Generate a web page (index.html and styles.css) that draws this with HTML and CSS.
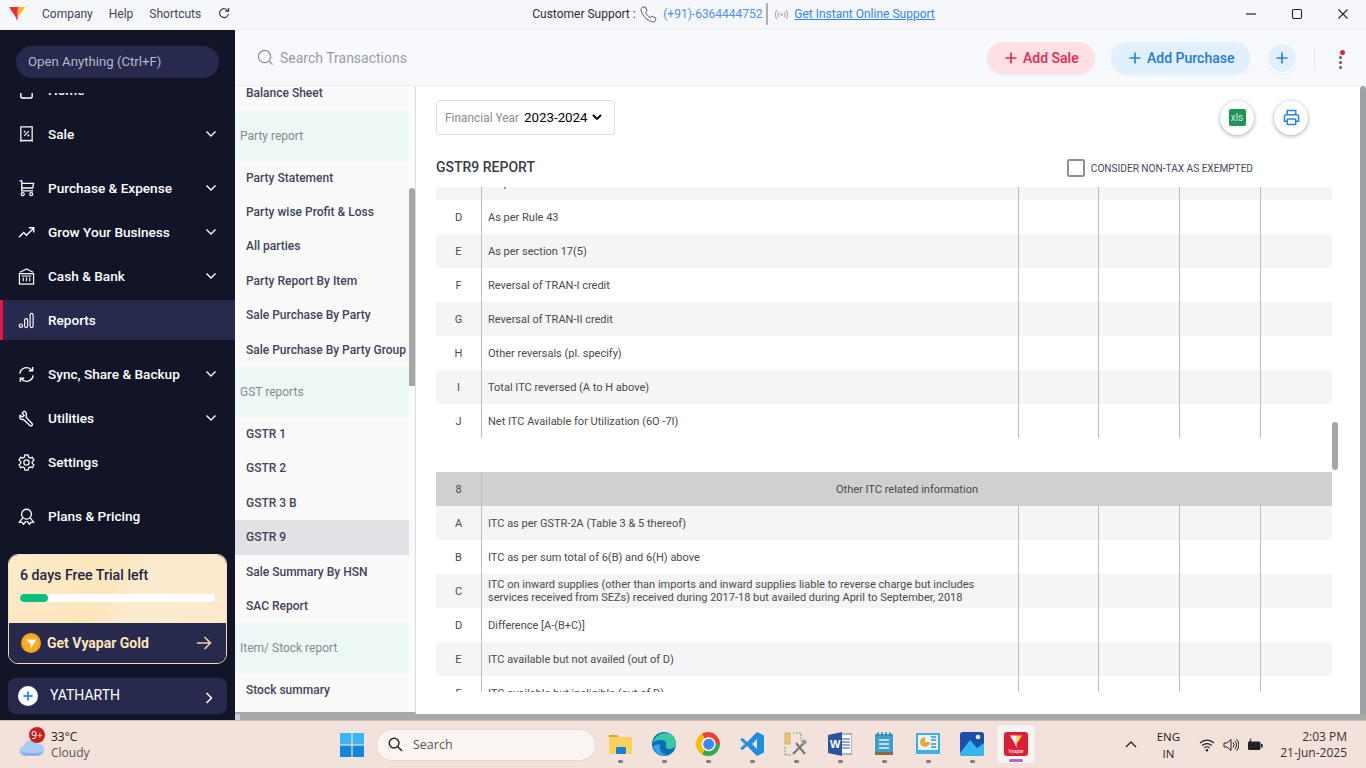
FILE: index.html
```html
<!DOCTYPE html>
<html lang="en">
<head>
<meta charset="utf-8">
<title>GSTR9 Report</title>
<link rel="stylesheet" href="styles.css">
</head>
<body>
<div class="app">
  <header class="titlebar">
    <svg class="logo" viewBox="0 0 16 14"><polygon points="0,0 9,0 8.5,14 6,9" fill="#ee2a3c"/><polygon points="9,0 16,0 8.5,11" fill="#fbb81f"/></svg>
    <nav class="menu"><span>Company</span><span>Help</span><span>Shortcuts</span></nav>
    <svg class="reload" viewBox="0 0 14 14"><path d="M11.6 3.4A5.2 5.2 0 1 0 12.2 7" fill="none" stroke="#333" stroke-width="1.3"/><path d="M8.4 3.6h4V0" fill="none" stroke="#333" stroke-width="1.3"/></svg>
    <div class="support">
      <span class="support-label">Customer Support :</span>
      <svg class="phone" viewBox="0 0 18 18"><path d="M3 1.2 5.6 1l2 4-1.700 1.500c.8 2.400 2.900 4.700 5.400 5.800l1.500-1.700 4 2.200-.4 2.700c-.3 1.100-1.500 1.600-2.800 1.300C7.500 15.500 2.500 10.500 1.200 4.500.9 3 1.700 1.600 3 1.200Z" fill="none" stroke="#555" stroke-width="1"/></svg>
      <span class="support-phone">(+91)-6364444752</span>
      <span class="support-rule"></span>
      <svg class="signal" viewBox="0 0 12 10"><circle cx="6" cy="5" r="1.200" fill="#aaa"/><path d="M3.800 2.500a3.500 3.500 0 0 0 0 5M8.200 2.500a3.500 3.500 0 0 1 0 5M1.800 1a6 6 0 0 0 0 8M10.200 1a6 6 0 0 1 0 8" fill="none" stroke="#aaa" stroke-width="1"/></svg>
      <a class="support-link">Get Instant Online Support</a>
    </div>
    <div class="winctl">
      <svg viewBox="0 0 12 12"><path d="M1 6h10" stroke="#222" stroke-width="1.200"/></svg>
      <svg viewBox="0 0 12 12"><rect x="1.500" y="1.500" width="9" height="9" rx="1.200" fill="none" stroke="#222" stroke-width="1.100"/></svg>
      <svg viewBox="0 0 12 12"><path d="M1.500 1.500l9 9M10.500 1.500l-9 9" stroke="#222" stroke-width="1.100"/></svg>
    </div>
  </header>

  <div class="shell">
    <aside class="sidebar">
      <div class="open-wrap"><div class="open-pill">Open Anything (Ctrl+F)</div></div>
      <nav class="nav">
        <div class="nav-item nav-first">
          <svg class="nav-icon" viewBox="0 0 18 18"><path d="M3 7v8a2 2 0 0 0 2 2h8a2 2 0 0 0 2-2V7" fill="none" stroke="#fff" stroke-width="1.500"/></svg>
          <span class="nav-text">Home</span>
          <svg class="chev" viewBox="0 0 12 8"><path d="M1.500 1.500 6 6l4.500-4.500" fill="none" stroke="#fff" stroke-width="1.400"/></svg>
        </div>
        <div class="nav-item">
          <svg class="nav-icon" viewBox="0 0 18 18"><path d="M3 1h12v15l-1.500-1-1.500 1-1.500-1-1.500 1-1.500-1-1.500 1-1.500-1L3 16Z" fill="none" stroke="#fff" stroke-width="1.300"/><path d="M6.500 10.500l5-5" stroke="#fff" stroke-width="1.200"/><circle cx="7" cy="6" r="1" fill="#fff"/><circle cx="11" cy="10" r="1" fill="#fff"/></svg>
          <span class="nav-text">Sale</span>
          <svg class="chev" viewBox="0 0 12 8"><path d="M1.500 1.500 6 6l4.500-4.500" fill="none" stroke="#fff" stroke-width="1.400"/></svg>
        </div>
        <div class="nav-item nav-gap">
          <svg class="nav-icon" viewBox="0 0 18 18"><path d="M1.500 1h2.500v10.500h12M4 3.500h12.500l-1 5H4" fill="none" stroke="#fff" stroke-width="1.400"/><circle cx="5" cy="15" r="1.600" fill="none" stroke="#fff" stroke-width="1.300"/><circle cx="14" cy="15" r="1.600" fill="none" stroke="#fff" stroke-width="1.300"/></svg>
          <span class="nav-text">Purchase &amp; Expense</span>
          <svg class="chev" viewBox="0 0 12 8"><path d="M1.500 1.500 6 6l4.500-4.500" fill="none" stroke="#fff" stroke-width="1.400"/></svg>
        </div>
        <div class="nav-item">
          <svg class="nav-icon" viewBox="0 0 18 18"><path d="M1 14l5-5 3 3 7.500-7.500M11.500 4h5.200v5" fill="none" stroke="#fff" stroke-width="1.500"/></svg>
          <span class="nav-text">Grow Your Business</span>
          <svg class="chev" viewBox="0 0 12 8"><path d="M1.500 1.500 6 6l4.500-4.500" fill="none" stroke="#fff" stroke-width="1.400"/></svg>
        </div>
        <div class="nav-item">
          <svg class="nav-icon" viewBox="0 0 18 18"><path d="M2 4.500 9 1l7 3.500" fill="none" stroke="#fff" stroke-width="1.200"/><rect x="1.500" y="6" width="15" height="11" fill="none" stroke="#fff" stroke-width="1.300"/><path d="M5.500 10v4M9 10v4M12.500 10v4M4 8.500h10" stroke="#fff" stroke-width="1.200"/></svg>
          <span class="nav-text">Cash &amp; Bank</span>
          <svg class="chev" viewBox="0 0 12 8"><path d="M1.500 1.500 6 6l4.500-4.500" fill="none" stroke="#fff" stroke-width="1.400"/></svg>
        </div>
        <div class="nav-item nav-active">
          <svg class="nav-icon" viewBox="0 0 18 18"><circle cx="3" cy="14.500" r="1.800" fill="none" stroke="#fff" stroke-width="1.200"/><rect x="7" y="7" width="3.200" height="9.500" rx="1.600" fill="none" stroke="#fff" stroke-width="1.200"/><rect x="12.800" y="1.500" width="3.200" height="15" rx="1.600" fill="none" stroke="#fff" stroke-width="1.200"/></svg>
          <span class="nav-text">Reports</span>
        </div>
        <div class="nav-item nav-gap">
          <svg class="nav-icon" viewBox="0 0 18 18"><path d="M2 8a7 7 0 0 1 12.500-3.500M16 10a7 7 0 0 1-12.500 3.500" fill="none" stroke="#fff" stroke-width="1.500"/><path d="M15.500 1v4h-4M2.500 17v-4h4" fill="none" stroke="#fff" stroke-width="1.500"/></svg>
          <span class="nav-text">Sync, Share &amp; Backup</span>
          <svg class="chev" viewBox="0 0 12 8"><path d="M1.500 1.500 6 6l4.500-4.500" fill="none" stroke="#fff" stroke-width="1.400"/></svg>
        </div>
        <div class="nav-item">
          <svg class="nav-icon" viewBox="0 0 18 18"><path d="M6.500 1.200 4.500 3.500l2 2.300-2 1.700L2.300 5.600C1 8 2.800 10.800 5.800 10l6.800 6.500c1.500 1.300 3.500-.6 2.200-2.200L8.500 7.500C9.500 4 8.500 1.500 6.500 1.200Z" fill="none" stroke="#fff" stroke-width="1.400"/></svg>
          <span class="nav-text">Utilities</span>
          <svg class="chev" viewBox="0 0 12 8"><path d="M1.500 1.500 6 6l4.500-4.500" fill="none" stroke="#fff" stroke-width="1.400"/></svg>
        </div>
        <div class="nav-item">
          <svg class="nav-icon" viewBox="0 0 18 18"><path d="M7.300 1h3.400l.5 2.300 1.700 1 2.300-.8 1.700 3-1.800 1.500v2l1.800 1.500-1.700 3-2.300-.8-1.700 1-.5 2.300H7.300l-.5-2.300-1.700-1-2.300.8-1.700-3L2.900 10V8L1.100 6.500l1.700-3 2.300.8 1.700-1Z" fill="none" stroke="#fff" stroke-width="1.300"/><circle cx="9" cy="9" r="2.800" fill="none" stroke="#fff" stroke-width="1.300"/></svg>
          <span class="nav-text">Settings</span>
        </div>
        <div class="nav-item nav-gap">
          <svg class="nav-icon" viewBox="0 0 18 18"><circle cx="9" cy="6.500" r="5.200" fill="none" stroke="#fff" stroke-width="1.400"/><path d="M5 10.500 1.500 15l3 .2 1.300 2L8.500 14M13 10.500l3.500 4.500-3 .2-1.300 2L9.500 14" fill="none" stroke="#fff" stroke-width="1.400"/></svg>
          <span class="nav-text">Plans &amp; Pricing</span>
        </div>
      </nav>
      <section class="trial">
        <div class="trial-top">
          <div class="trial-title">6 days Free Trial left</div>
          <div class="trial-track"><div class="trial-fill"></div></div>
        </div>
        <div class="trial-bottom">
          <svg class="coin" viewBox="0 0 20 20"><circle cx="10" cy="10" r="10" fill="#f6a21a"/><circle cx="10" cy="10" r="8" fill="#f9ae22"/><polygon points="4.500,6.500 15.500,6.500 10,15 9,10" fill="#fff"/></svg>
          <span class="trial-gold">Get Vyapar Gold</span>
          <svg class="trial-arrow" viewBox="0 0 16 14"><path d="M1 7h13.500M8.500 1l6 6-6 6" fill="none" stroke="#f2d3a6" stroke-width="1.500"/></svg>
        </div>
      </section>
      <div class="company">
        <svg class="company-icon" viewBox="0 0 20 20"><circle cx="10" cy="10" r="10" fill="#fff"/><path d="M10 5.500v9M5.500 10h9" stroke="#3b8fec" stroke-width="2"/></svg>
        <span class="company-name">YATHARTH</span>
        <svg class="company-chev" viewBox="0 0 8 12"><path d="M1.500 1 6.500 6l-5 5" fill="none" stroke="#fff" stroke-width="1.500"/></svg>
      </div>
    </aside>

    <div class="content">
      <div class="toolbar">
        <svg class="search-icon" viewBox="0 0 18 18"><circle cx="8" cy="8" r="6.500" fill="none" stroke="#8a8f99" stroke-width="1.300"/><path d="M13 13l3.500 3.500" stroke="#8a8f99" stroke-width="1.300"/></svg>
        <span class="search-text">Search Transactions</span>
        <div class="pill pill-sale"><svg class="pill-plus" viewBox="0 0 12 12"><path d="M6 .5v11M.5 6h11" stroke="#e9264d" stroke-width="1.700"/></svg>Add Sale</div>
        <div class="pill pill-buy"><svg class="pill-plus" viewBox="0 0 12 12"><path d="M6 .5v11M.5 6h11" stroke="#2a82e4" stroke-width="1.700"/></svg>Add Purchase</div>
        <div class="plus-round"><svg class="pill-plus" viewBox="0 0 12 12"><path d="M6 .5v11M.5 6h11" stroke="#2a82e4" stroke-width="1.700"/></svg></div>
        <span class="tool-sep"></span>
        <div class="kebab"><i class="kebab-red"></i><i></i><i></i><i></i></div>
      </div>

      <div class="work">
        <div class="panel">
          <div class="list">
            <div class="list-inner">
              <div class="li">Balance Sheet</div>
              <div class="lh">Party report</div>
              <div class="li">Party Statement</div>
              <div class="li">Party wise Profit &amp; Loss</div>
              <div class="li">All parties</div>
              <div class="li">Party Report By Item</div>
              <div class="li">Sale Purchase By Party</div>
              <div class="li">Sale Purchase By Party Group</div>
              <div class="lh">GST reports</div>
              <div class="li">GSTR 1</div>
              <div class="li">GSTR 2</div>
              <div class="li">GSTR 3 B</div>
              <div class="li li-on">GSTR 9</div>
              <div class="li">Sale Summary By HSN</div>
              <div class="li">SAC Report</div>
              <div class="lh">Item/ Stock report</div>
              <div class="li">Stock summary</div>
              <div class="li">Stock detail</div>
            </div>
          </div>
          <div class="panel-scroll"><div class="panel-thumb"></div></div>
        </div>

        <main class="main">
          <div class="filter-row">
            <div class="fy">
              <span class="fy-label">Financial Year</span>
              <span class="fy-value">2023-2024<svg class="fy-chev" viewBox="0 0 10 7"><path d="M1 1l4 4 4-4" fill="none" stroke="#000" stroke-width="1.800"/></svg></span>
            </div>
            <div class="round-btns">
              <div class="round"><span class="xls">xls</span></div>
              <div class="round"><svg class="print" viewBox="0 0 18 18"><path d="M4.500 6V1.500h9V6" fill="none" stroke="#2a82e4" stroke-width="1.600"/><path d="M4.500 13H1.500V8a2 2 0 0 1 2-2h11a2 2 0 0 1 2 2v5h-3" fill="none" stroke="#2a82e4" stroke-width="1.600"/><rect x="4.500" y="10.500" width="9" height="6" rx="1" fill="none" stroke="#2a82e4" stroke-width="1.600"/></svg></div>
            </div>
          </div>
          <div class="title-row">
            <h1 class="report-title">GSTR9 REPORT</h1>
            <label class="exempt"><span class="check"></span><span class="exempt-text">CONSIDER NON-TAX AS EXEMPTED</span></label>
          </div>
          <div class="table-area">
            <div class="table">
              <div class="table-inner">
                <div class="row alt"><div class="c0">C</div><div class="c1">As per Rule 42</div><i></i><i></i><i></i><i></i></div>
                <div class="row"><div class="c0">D</div><div class="c1">As per Rule 43</div><i></i><i></i><i></i><i></i></div>
                <div class="row alt"><div class="c0">E</div><div class="c1">As per section 17(5)</div><i></i><i></i><i></i><i></i></div>
                <div class="row"><div class="c0">F</div><div class="c1">Reversal of TRAN-I credit</div><i></i><i></i><i></i><i></i></div>
                <div class="row alt"><div class="c0">G</div><div class="c1">Reversal of TRAN-II credit</div><i></i><i></i><i></i><i></i></div>
                <div class="row"><div class="c0">H</div><div class="c1">Other reversals (pl. specify)</div><i></i><i></i><i></i><i></i></div>
                <div class="row alt"><div class="c0">I</div><div class="c1">Total ITC reversed (A to H above)</div><i></i><i></i><i></i><i></i></div>
                <div class="row"><div class="c0">J</div><div class="c1">Net ITC Available for Utilization (6O -7I)</div><i></i><i></i><i></i><i></i></div>
                <div class="spacer"></div>
                <div class="row-head"><div class="c0">8</div><div class="head-text">Other ITC related information</div></div>
                <div class="row alt"><div class="c0">A</div><div class="c1">ITC as per GSTR-2A (Table 3 &amp; 5 thereof)</div><i></i><i></i><i></i><i></i></div>
                <div class="row"><div class="c0">B</div><div class="c1">ITC as per sum total of 6(B) and 6(H) above</div><i></i><i></i><i></i><i></i></div>
                <div class="row alt"><div class="c0">C</div><div class="c1 c1-wrap">ITC on inward supplies (other than imports and inward supplies liable to reverse charge but includes<br>services received from SEZs) received during 2017-18 but availed during April to September, 2018</div><i></i><i></i><i></i><i></i></div>
                <div class="row"><div class="c0">D</div><div class="c1">Difference [A-(B+C)]</div><i></i><i></i><i></i><i></i></div>
                <div class="row alt"><div class="c0">E</div><div class="c1">ITC available but not availed (out of D)</div><i></i><i></i><i></i><i></i></div>
                <div class="row"><div class="c0">F</div><div class="c1">ITC available but ineligible (out of D)</div><i></i><i></i><i></i><i></i></div>
              </div>
            </div>
            <div class="table-scroll"><div class="table-thumb"></div></div>
          </div>
        </main>
        <div class="vbar"></div>
      </div>
      <div class="hbar"><span class="hbar-cap"></span></div>
    </div>
  </div>

  <footer class="taskbar">
    <div class="weather">
      <svg class="cloud" viewBox="0 0 26 20"><path d="M6 19a5 5 0 0 1-1-10 8 8 0 0 1 15-2 6 6 0 0 1 1 12Z" fill="#a9ccf3"/><path d="M2 15c5 2 17 2 22 0-1 3-3 4-5 4H6c-2 0-3-2-4-4Z" fill="#7fb0ea"/></svg>
      <span class="badge">9+</span>
      <div class="weather-text"><div class="temp">33°C</div><div class="sky">Cloudy</div></div>
    </div>
    <svg class="start" viewBox="0 0 24 24"><rect x="0" y="0" width="11.400" height="11.400" fill="#38b6f1"/><rect x="12.600" y="0" width="11.400" height="11.400" fill="#38b6f1"/><rect x="0" y="12.600" width="11.400" height="11.400" fill="#0f86d9"/><rect x="12.600" y="12.600" width="11.400" height="11.400" fill="#0f86d9"/></svg>
    <div class="tb-search">
      <svg class="tb-search-icon" viewBox="0 0 16 16"><circle cx="6.500" cy="6.500" r="5.200" fill="none" stroke="#222" stroke-width="1.500"/><path d="M10.500 10.500 15 15" stroke="#222" stroke-width="1.600"/></svg>
      <span>Search</span>
    </div>
    <div class="apps">
      <div class="app-slot"><svg class="app-icon" viewBox="0 0 24 24"><path d="M1 3h8l2 2H1Z" fill="#e0a526"/><rect x="1" y="5" width="23" height="17" fill="#fcd25a"/><rect x="8" y="15" width="10" height="7" rx="1" fill="#0f86d9"/></svg><b></b></div>
      <div class="app-slot"><svg class="app-icon" viewBox="0 0 24 24"><circle cx="12" cy="12" r="12" fill="#0c6db8"/><path d="M1 11C3 3 11-1 18 2c5 2 6 7 6 10 0 3-3 5-7 5-3 0-4-2-3-4 1-3-2-5-5-5-4 0-7 1-8 3Z" fill="#36c9a6"/><path d="M8 13c-1 5 2 9 7 10 -6 2-12-2-14-8 1-2 4-3 7-2Z" fill="#38a4ec"/></svg><b></b></div>
      <div class="app-slot"><span class="chrome"><span class="chrome-dot"></span></span><b></b></div>
      <div class="app-slot"><svg class="app-icon" viewBox="0 0 24 24"><path d="M17 0 24 3.500v17L17 24 7 14 2.500 18 0 16.500 5 12 0 7.500 2.500 6 7 10Zm0 7-5 5 5 5Z" fill="#1b8fe0"/></svg><b></b></div>
      <div class="app-slot"><svg class="app-icon" viewBox="0 0 24 24"><rect x="1" y="1" width="5" height="11" fill="#f2c94c" stroke="#888" stroke-width=".5"/><path d="M9 1h8v8M1 15v8h6" fill="none" stroke="#6aa84f" stroke-width="1" stroke-dasharray="2 1"/><path d="M9 22 20 11M12 11l9 11" stroke="#777" stroke-width="2.200"/><circle cx="20" cy="10" r="2.500" fill="#999"/></svg><b></b></div>
      <div class="app-slot"><svg class="app-icon" viewBox="0 0 24 24"><rect x="9" y="2" width="15" height="20" fill="#fff" stroke="#2b579a" stroke-width=".8"/><path d="M14 7h8M14 10h8M14 13h8M14 16h8" stroke="#2b579a" stroke-width="1"/><polygon points="0,3 14,0 14,24 0,21" fill="#2b579a"/><text x="2" y="16" class="word-w">W</text></svg><b></b></div>
      <div class="app-slot"><svg class="app-icon" viewBox="0 0 24 24"><rect x="3" y="2" width="18" height="21" fill="#3aa0c9"/><rect x="3" y="20" width="18" height="3" fill="#8a6a3a"/><path d="M7 8h10M7 12h10M7 16h10" stroke="#e5f5fb" stroke-width="1.500"/><path d="M6 0v4M10 0v4M14 0v4M18 0v4" stroke="#1f7da3" stroke-width="1.300"/></svg><b></b></div>
      <div class="app-slot"><svg class="app-icon" viewBox="0 0 24 24"><rect x="0" y="1" width="24" height="21" fill="#3cb0ea"/><rect x="2" y="3" width="20" height="15" fill="#e6f5fd"/><path d="M9 5a5 5 0 1 0 5 5H9Z" fill="#f2a33a"/><path d="M15 5h5M15 8h5M15 12h5M15 15h5" stroke="#3c8fd0" stroke-width="1.400"/></svg><b></b></div>
      <div class="app-slot"><svg class="app-icon" viewBox="0 0 24 24"><rect x="0" y="0" width="24" height="24" rx="3" fill="#1c4fa8"/><path d="M0 21 10 8l7 8 7-5v10a3 3 0 0 1-3 3H3a3 3 0 0 1-3-3Z" fill="#35b6ee"/><circle cx="18" cy="5" r="2.300" fill="#dff3ff"/></svg><b></b></div>
      <div class="app-slot slot-active">
        <div class="vy"><svg class="vy-mark" viewBox="0 0 16 14"><polygon points="1,0 9,0 8.500,14 6,8" fill="#fff"/><polygon points="9,0 15,0 8.500,10" fill="#ffd24a"/></svg><span class="vy-text">Vyapar</span></div>
        <b></b>
      </div>
    </div>
    <div class="tray">
      <svg class="tray-caret" viewBox="0 0 12 7"><path d="M1 6l5-5 5 5" fill="none" stroke="#222" stroke-width="1.300"/></svg>
      <div class="lang">ENG<br>IN</div>
      <svg class="tray-icon" viewBox="0 0 16 14"><path d="M1 5a10 10 0 0 1 14 0M3.200 7.500a7 7 0 0 1 9.600 0M5.400 10a3.800 3.800 0 0 1 5.200 0" fill="none" stroke="#222" stroke-width="1.100"/><circle cx="8" cy="12.300" r="1.200" fill="#222"/></svg>
      <svg class="tray-icon" viewBox="0 0 16 14"><path d="M1 5h3l4-3.500v11L4 9H1Z" fill="none" stroke="#222" stroke-width="1"/><path d="M10 4.500a3.500 3.500 0 0 1 0 5M11.800 2.800a6 6 0 0 1 0 8.400M13.500 1.200a8.300 8.300 0 0 1 0 11.600" fill="none" stroke="#222" stroke-width="1"/></svg>
      <svg class="tray-icon" viewBox="0 0 16 14"><rect x="1" y="3.500" width="12.500" height="8.500" rx="1.500" fill="#222"/><rect x="14" y="6" width="1.600" height="3.500" fill="#222"/><path d="M4 .5 2.500 4H5L3.500 7" fill="none" stroke="#222" stroke-width="1"/></svg>
      <div class="clock"><div>2:03 PM</div><div>21-Jun-2025</div></div>
    </div>
  </footer>
</div>
</body>
</html>
```
FILE: styles.css
```css
* { box-sizing: border-box; }
html, body { margin: 0; padding: 0; }
body { width: 1366px; height: 768px; overflow: hidden; font-family: Roboto, "Liberation Sans", sans-serif; background: #fff; }
.app { width: 1366px; height: 768px; display: flex; flex-direction: column; }

/* title bar */
.titlebar { height: 30px; flex: none; display: flex; align-items: center; background: #f6f7fb; border-bottom: 2px solid #f2f2f5; padding: 0 0 0 9px; font-size: 12px; color: #3f4458; }
.logo { width: 16px; height: 14px; margin-right: 17px; }
.menu { display: flex; gap: 16px; }
.reload { width: 12px; height: 12px; margin-left: 17px; }
.support { display: flex; align-items: center; margin-left: 302px; }
.support-label { color: #2c2c36; width: 108px; white-space: nowrap; }
.phone { width: 17px; height: 17px; }
.support-phone { color: #4f8fef; margin-left: 6px; width: 103px; white-space: nowrap; }
.support-rule { height: 22px; width: 2px; background: #aeb0b6; margin-right: 7px; }
.signal { width: 13px; height: 11px; margin-right: 6px; }
.support-link { color: #2f86ee; text-decoration: underline; white-space: nowrap; }
.winctl { display: flex; margin-left: auto; gap: 34px; padding-right: 17px; }
.winctl svg { width: 12px; height: 12px; }

.shell { flex: 1; display: flex; min-height: 0; }

/* sidebar */
.sidebar { width: 235px; flex: none; background: #121428; display: flex; flex-direction: column; }
.open-wrap { height: 63px; flex: none; padding: 16px 16px 0; }
.open-pill { height: 32px; width: 203px; border-radius: 16px; background: #272a4d; color: #b4b9cb; font-size: 13.200px; line-height: 31px; padding-left: 12px; white-space: nowrap; }
.nav { height: 461px; flex: none; overflow: hidden; display: flex; flex-direction: column; }
.nav-item { height: 44px; flex: none; display: flex; align-items: center; padding-left: 18px; color: #fff; font-size: 13.600px; font-weight: 500; }
.nav-first { margin-top: -25px; }
.nav-gap { margin-top: 10px; }
.nav-active { height: 40px; margin: 2px 0; background: #272a4d; border-left: 3px solid #e8173f; padding-left: 15px; }
.nav-icon { width: 17px; height: 17px; flex: none; margin-right: 13px; }
.nav-text { white-space: nowrap; }
.chev { width: 12px; height: 8px; margin-left: auto; margin-right: 18px; }

.trial { height: 110px; margin: 0 8px; flex: none; border: 1px solid #f5dfbb; border-radius: 10px; overflow: hidden; display: flex; flex-direction: column; }
.trial-top { height: 68px; background: linear-gradient(115deg, #fdebc8 0%, #fce6bd 45%, #fdebd0 60%, #fdeacb 100%); padding: 12px 11px 0; }
.trial-title { font-size: 14.200px; font-weight: 500; color: #1f2447; line-height: 17px; white-space: nowrap; }
.trial-track { height: 8px; width: 195px; border-radius: 4px; background: #fff; margin-top: 10px; overflow: hidden; }
.trial-fill { height: 8px; width: 28px; border-radius: 4px; background: #0dbf7f; }
.trial-bottom { flex: 1; background: #272a4d; display: flex; align-items: center; padding-left: 12px; }
.coin { width: 20px; height: 20px; }
.trial-gold { margin-left: 6px; font-size: 14px; font-weight: 700; color: #fde6bd; }
.trial-arrow { width: 16px; height: 14px; margin-left: auto; margin-right: 14px; }
.company { height: 36px; margin: 14px 8px 6px; flex: none; border-radius: 8px; background: #272a4d; display: flex; align-items: center; padding-left: 10px; color: #fff; font-size: 14px; }
.company-icon { width: 20px; height: 20px; }
.company-name { margin-left: 12px; margin-top: -2px; }
.company-chev { width: 8px; height: 12px; margin-left: auto; margin-right: 14px; margin-top: 3px; }

/* right content */
.content { flex: 1; min-width: 0; display: flex; flex-direction: column; }
.toolbar { height: 56px; flex: none; display: flex; align-items: center; background: #f8f9fc; border-bottom: 1px solid #efeff2; padding-left: 22px; }
.search-icon { width: 17px; height: 17px; }
.search-text { margin-left: 6px; font-size: 14px; color: #9a9ca3; }
.pill { height: 32px; border-radius: 16px; display: flex; align-items: center; font-size: 14px; font-weight: 500; flex: none; box-shadow: 0 1px 3px rgba(0,0,0,.06); }
.pill-sale { width: 108px; margin-left: auto; background: #ffe1e5; color: #e9264d; padding-left: 18px; }
.pill-buy { width: 139px; margin-left: 16px; background: #e1f0ff; color: #2478dc; padding-left: 18px; }
.pill-plus { width: 12px; height: 12px; margin-right: 6px; flex: none; }
.plus-round { width: 28px; height: 28px; margin-left: 18px; border-radius: 50%; background: #e1f0ff; box-shadow: 0 0 0 1.500px #fff, 0 1px 3px 1px rgba(0,0,0,.1); display: flex; align-items: center; justify-content: center; }
.plus-round .pill-plus { margin: 0; }
.tool-sep { width: 1px; height: 24px; margin-left: 18px; background: #e2e2e6; }
.kebab { display: flex; flex-direction: column; align-items: center; gap: 2px; width: 51px; margin-top: 4px; }
.kebab i { width: 3px; height: 3px; border-radius: 50%; background: #5a5d6a; }
.kebab .kebab-red { width: 5px; height: 5px; background: #ee1c3e; margin-left: 3px; margin-bottom: -1px; }

.work { height: 628px; flex: none; display: flex; background: #fff; }
.panel { width: 181px; height: 628px; flex: none; display: flex; background: #fafafa; border-right: 1px solid #dcdcdc; border-bottom: 2px solid #a9a9a9; }
.list { width: 174px; flex: none; overflow: hidden; }
.list-inner { margin-top: -9.800px; }
.li { height: 34.400px; line-height: 34px; padding-left: 11px; font-size: 12px; font-weight: 500; color: #43435a; white-space: nowrap; }
.li-on { background: #e2e2e6; }
.lh { height: 50px; line-height: 50px; padding-left: 5px; font-size: 12px; color: #8a8a8a; background: #edf7f6; }
.panel-scroll { width: 6px; flex: none; }
.panel-thumb { margin-top: 102px; height: 198px; border-radius: 3px 3px 0 0; background: #a6a6a6; }

.main { width: 944px; flex: none; padding: 14px 0 0 20px; }
.filter-row { height: 35px; width: 872px; display: flex; justify-content: space-between; align-items: center; }
.fy { height: 35px; width: 179px; border: 1px solid #dedede; border-radius: 4px; display: flex; align-items: center; padding-left: 8px; }
.fy-label { font-size: 11.900px; color: #8a8a8a; white-space: nowrap; }
.fy-value { background: #fff; font-size: 13.300px; color: #000; padding: 0 4px 0 5px; display: flex; align-items: center; line-height: 17px; white-space: nowrap; }
.fy-chev { width: 10px; height: 7px; margin-left: 4px; }
.round-btns { display: flex; gap: 20px; }
.round { width: 34px; height: 34px; border-radius: 50%; background: #fff; box-shadow: 0 1px 4px rgba(0,0,0,.35); display: flex; align-items: center; justify-content: center; }
.xls { width: 17px; height: 17px; background: #1e9457; border-radius: 2px; color: #cfe9d8; font-size: 10px; line-height: 17px; text-align: center; }
.print { width: 17px; height: 17px; }
.title-row { height: 52px; padding-top: 12px; width: 817px; display: flex; justify-content: space-between; align-items: center; }
.report-title { margin: 0; font-size: 14px; font-weight: 500; color: #3c3c46; }
.exempt { display: flex; align-items: center; margin-top: 2px; }
.check { width: 18px; height: 18px; border: 2px solid #8f8f8f; border-radius: 2px; background: #fff; }
.exempt-text { margin-left: 6px; font-size: 10.100px; color: #4a4560; white-space: nowrap; }

.table-area { display: flex; height: 505px; }
.table { width: 896px; flex: none; overflow: hidden; }
.table-inner { margin-top: -21px; }
.row { height: 34px; display: grid; grid-template-columns: 45px 537px 80px 81px 81px 72px; background: #fff; font-size: 11px; color: #4a4a4a; }
.row.alt { background: #f5f5f5; }
.row i { display: block; border-left: 1px solid #bdbdbd; }
.c0 { text-align: center; line-height: 32px; padding-top: 2px; }
.c1 { border-left: 1px solid #bdbdbd; padding-left: 6px; padding-top: 2px; line-height: 32px; white-space: nowrap; }
.c1-wrap { line-height: 12.500px; padding-top: 5px; }
.spacer { height: 34px; }
.row-head { height: 34px; display: grid; grid-template-columns: 45px 851px; background: #d0d0d0; font-size: 11px; color: #4a4a4a; }
.head-text { border-left: 1px solid #bdbdbd; text-align: center; line-height: 32px; padding-top: 2px; }
.table-scroll { width: 6px; flex: none; }
.table-thumb { margin-top: 235px; height: 48px; border-radius: 3px; background: #a6a6a6; }
.vbar { width: 6px; flex: none; background: #9ea1a4; border-radius: 3px 3px 0 0; }
.hbar { height: 6px; flex: none; background: #a9a9a9; display: flex; }
.hbar-cap { width: 5px; background: #c9d2e0; }

/* taskbar */
.taskbar { height: 48px; flex: none; display: flex; align-items: center; background: #f3e1dc; border-top: 1px solid #c9bdb9; }
.weather { width: 340px; flex: none; height: 47px; display: flex; align-items: center; padding-left: 19px; position: relative; }
.cloud { width: 25px; height: 20px; margin-top: 4px; }
.badge { position: absolute; left: 29px; top: 6px; width: 16px; height: 16px; border-radius: 50%; background: #c4211c; color: #fff; font-family: "Open Sans", sans-serif; font-size: 10px; line-height: 16px; text-align: center; }
.weather-text { margin-left: 7px; font-family: "Open Sans", sans-serif; font-size: 12px; line-height: 16px; color: #222; }
.sky { color: #555; }
.start { width: 24px; height: 24px; flex: none; }
.tb-search { width: 218px; height: 30px; margin-left: 13px; flex: none; border-radius: 15px; background: #fbf5f2; box-shadow: 0 0 0 1px #e8d9d4; display: flex; align-items: center; padding-left: 11px; font-family: "Open Sans", sans-serif; font-size: 12.500px; color: #555; }
.tb-search-icon { width: 15px; height: 15px; margin-right: 10px; }
.apps { display: flex; margin-left: 3px; height: 47px; }
.app-slot { width: 44px; display: flex; flex-direction: column; align-items: center; justify-content: flex-start; padding-top: 11px; }
.app-slot b { display: block; width: 5px; height: 3px; border-radius: 2px; background: #7f7a78; margin-top: 4px; }
.app-icon { width: 24px; height: 24px; }
.chrome { width: 24px; height: 24px; border-radius: 50%; background: conic-gradient(#e94335 0 120deg, #34a853 120deg 240deg, #fbbc05 240deg 360deg); display: flex; align-items: center; justify-content: center; transform: rotate(-30deg); }
.chrome-dot { width: 11px; height: 11px; border-radius: 50%; background: #4285f4; box-shadow: 0 0 0 1.500px #fff; }
.word-w { font-family: "Liberation Sans", sans-serif; font-size: 11px; fill: #fff; font-weight: 700; }
.slot-active { background: #fbf3f1; border-radius: 4px; width: 38px; margin: 4px 0 0 3px; height: 38px; padding-top: 7px; box-shadow: 0 0 1px rgba(0,0,0,.1); }
.slot-active b { width: 14px; margin-top: 3px; background: #b062c8; }
.vy { width: 24px; height: 24px; background: #dc1f36; border-radius: 3px; display: flex; flex-direction: column; align-items: center; }
.vy-mark { width: 14px; height: 13px; margin-top: 3px; }
.vy-text { font-size: 5px; line-height: 6px; color: #fff; }
.tray { margin-left: auto; display: flex; align-items: center; padding-right: 19px; font-family: "Open Sans", sans-serif; color: #222; font-size: 11.500px; }
.tray-caret { width: 12px; height: 7px; margin-right: 20px; }
.lang { text-align: center; line-height: 17px; margin-right: 19px; }
.tray-icon { width: 16px; height: 14px; margin-right: 8px; }
.clock { margin-left: 9px; text-align: right; line-height: 16px; color: #333; font-size: 12px; }
```
